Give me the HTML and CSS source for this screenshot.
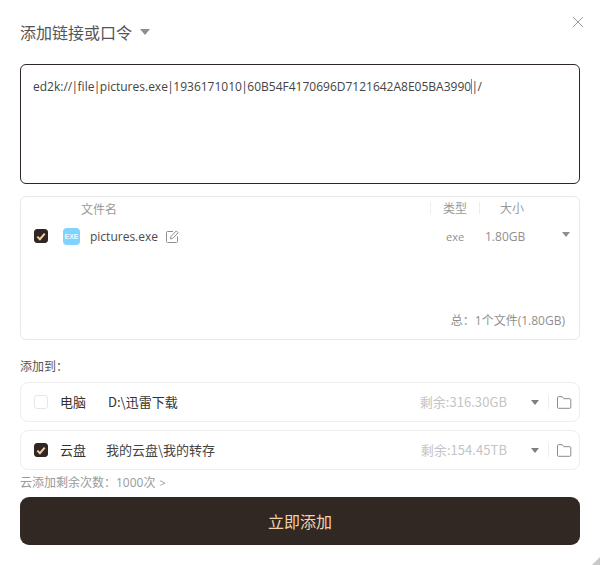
FILE: index.html
```html
<!DOCTYPE html>
<html lang="zh">
<head>
<meta charset="utf-8">
<title>添加链接或口令</title>
<link rel="stylesheet" href="styles.css">
</head>
<body>
<main class="dialog">
  <header class="head">
    <h1 class="title">添加链接或口令</h1>
    <span class="tri tri-title"></span>
    <svg class="close" width="12" height="12" viewBox="0 0 12 12"><path d="M1 1l10 10M11 1L1 11" stroke="#9a9a9a" stroke-width="1" fill="none"/></svg>
  </header>
  <div class="link-box">ed2k://<span class="pipe">|</span>file<span class="pipe">|</span>pictures.exe<span class="pipe">|</span>1936171010<span class="pipe">|</span>60B54F4170696D7121642A8E05BA3990<span class="caret"></span><span class="pipe">|</span>/</div>
  <section class="files">
    <div class="file-head">
      <span class="col-name">文件名</span>
      <span class="col-type">类型</span>
      <span class="col-size">大小</span>
    </div>
    <div class="file-row">
      <span class="check on"><svg width="10" height="9" viewBox="0 0 10 9"><path d="M1.300 4.600l2.600 2.600L8.700 1.600" stroke="#f3cfa0" stroke-width="2" fill="none"/></svg></span>
      <span class="exe">EXE</span>
      <span class="file-name">pictures.exe</span>
      <svg class="edit" width="13" height="13" viewBox="0 0 13 13"><path d="M7 1.500H1.500a1 1 0 0 0-1 1v9a1 1 0 0 0 1 1h9a1 1 0 0 0 1-1V6.500M4.500 8.800l.4-2.300L10.300.900l1.900 1.900-5.500 5.600z" stroke="#8f8f8f" stroke-width="1" fill="none"/></svg>
      <span class="file-type">exe</span>
      <span class="file-size">1.80GB</span>
      <span class="tri tri-row"></span>
    </div>
    <div class="total">总：1个文件(1.80GB)</div>
  </section>
  <div class="add-to">添加到：</div>
  <div class="target">
    <span class="check"></span>
    <span class="target-name">电脑</span>
    <span class="target-path path-pc">D:\迅雷下载</span>
    <span class="free">剩余:316.30GB</span>
    <span class="tri tri-target"></span>
    <span class="sep"></span>
    <svg class="folder" width="15" height="13" viewBox="0 0 15 13"><path d="M1.500.700h3.800l1.500 2h6a1 1 0 0 1 1 1v7.600a1 1 0 0 1-1 1H1.500a1 1 0 0 1-1-1V1.700a1 1 0 0 1 1-1z" stroke="#8a8a90" stroke-width="1" fill="none"/></svg>
  </div>
  <div class="target">
    <span class="check on"><svg width="10" height="9" viewBox="0 0 10 9"><path d="M1.300 4.600l2.600 2.600L8.700 1.600" stroke="#f3cfa0" stroke-width="2" fill="none"/></svg></span>
    <span class="target-name">云盘</span>
    <span class="target-path path-cloud">我的云盘\我的转存</span>
    <span class="free">剩余:154.45TB</span>
    <span class="tri tri-target"></span>
    <span class="sep"></span>
    <svg class="folder" width="15" height="13" viewBox="0 0 15 13"><path d="M1.500.700h3.800l1.500 2h6a1 1 0 0 1 1 1v7.600a1 1 0 0 1-1 1H1.500a1 1 0 0 1-1-1V1.700a1 1 0 0 1 1-1z" stroke="#8a8a90" stroke-width="1" fill="none"/></svg>
  </div>
  <div class="quota">云添加剩余次数：1000次 <span class="gt">&gt;</span></div>
  <button class="submit" type="button">立即添加</button>
  <span class="grip"></span>
</main>
</body>
</html>
```
FILE: styles.css
```css
* { box-sizing: border-box; }
html, body { margin: 0; padding: 0; background: #fff; }
body {
  width: 600px;
  height: 565px;
  overflow: hidden;
  font-family: "Open Sans", "Noto Sans CJK SC", sans-serif;
  color: #333;
}
.dialog {
  position: relative;
  width: 600px;
  height: 565px;
  padding: 0 20px;
  display: flex;
  flex-direction: column;
}
.head {
  height: 64px;
  display: flex;
  align-items: center;
  padding-bottom: 1px;
}
.title {
  margin: 0;
  font-size: 16px;
  font-weight: 400;
  color: #555;
  line-height: 24px;
  font-family: "Noto Sans CJK SC", sans-serif;
}
.tri {
  display: block;
  width: 0;
  height: 0;
  border-style: solid;
  border-color: #8e8e8e transparent transparent;
}
.tri-title {
  margin-left: 8px;
  border-width: 6px 5px 0;
  margin-top: 1px;
}
.close { position: absolute; top: 16px; right: 16px; }
.link-box {
  height: 120px;
  border: 1px solid #2f2723;
  border-radius: 6px;
  padding: 13px 12px;
  font-size: 12px;
  line-height: 18px;
  color: #444;
  white-space: nowrap;
}
.pipe { margin: 0 -0.6px; }
.caret {
  display: inline-block;
  width: 1px;
  height: 15px;
  background: #888;
  vertical-align: -3px;
}
.files {
  margin-top: 12px;
  height: 144px;
  border: 1px solid #e8e8e8;
  border-radius: 6px;
  display: flex;
  flex-direction: column;
  font-size: 12px;
}
.file-head {
  display: flex;
  align-items: center;
  height: 22px;
  padding-left: 60px;
  color: #9a9a9a;
  font-family: "Noto Sans CJK SC", sans-serif;
}
.col-name { flex: 1; }
.col-type {
  width: 49px;
  padding-left: 12px;
  border-left: 1px solid #eee;
  line-height: 12px;
}
.col-size {
  width: 100px;
  padding-left: 20px;
  border-left: 1px solid #eee;
  line-height: 12px;
}
.file-row {
  display: flex;
  align-items: center;
  height: 34px;
  padding-left: 13px;
}
.check {
  flex: none;
  width: 14px;
  height: 14px;
  border: 1px solid #e6e6e6;
  border-radius: 3px;
  display: flex;
  align-items: center;
  justify-content: center;
}
.check.on { background: #2f2723; border-color: #2f2723; }
.exe {
  margin-left: 15px;
  width: 17px;
  height: 17px;
  border-radius: 4px;
  background: #7fd4ff;
  color: #eaf8ff;
  font-family: "Liberation Sans", sans-serif;
  font-size: 7px;
  font-weight: 700;
  line-height: 17px;
  text-align: center;
}
.file-name { margin-left: 10px; font-size: 12px; color: #4a4a4a; }
.edit { margin-left: 8px; }
.file-type { margin-left: auto; color: #8f8f8f; font-size: 11px; width: 39px; }
.file-size { width: 77px; color: #8f8f8f; }
.tri-row { margin-right: 9px; border-width: 5px 4px 0; margin-top: -3px; }
.total {
  margin-top: auto;
  padding: 0 14px 9px 0;
  text-align: right;
  color: #8f8f8f;
  line-height: 18px;
}
.add-to {
  margin-top: 17px;
  height: 25px;
  line-height: 18px;
  font-size: 12px;
  color: #555;
  font-family: "Noto Sans CJK SC", sans-serif;
}
.target {
  height: 40px;
  margin-bottom: 8px;
  border: 1px solid #eeeeee;
  border-radius: 8px;
  display: flex;
  align-items: center;
  padding-left: 13px;
  font-size: 13px;
  line-height: 18px;
  font-family: "Noto Sans CJK SC", sans-serif;
}
.target-name { margin-left: 12px; width: 27px; color: #333; }
.target-path { color: #333; }
.path-pc { margin-left: 21px; }
.path-cloud { margin-left: 19px; color: #444; }
.free { margin-left: auto; color: #c4c4c4; font-size: 13px; letter-spacing: 0.05px; }
.tri-target { margin-left: 24px; border-width: 5px 4px 0; border-top-color: #7d7d86; }
.sep { margin-left: 9px; width: 1px; height: 14px; background: #eee; }
.folder { margin: 0 7px 0 8px; }
.quota {
  margin-top: -4px;
  height: 23px;
  line-height: 18px;
  font-size: 12px;
  color: #9a9a9a;
  white-space: nowrap;
}
.gt { margin-left: 1px; font-size: 11px; }
.submit {
  height: 48px;
  border: 0;
  border-radius: 9px;
  background: #312824;
  color: #f3d2a8;
  font-size: 16px;
  font-family: "Noto Sans CJK SC", sans-serif;
}
.grip {
  position: absolute;
  right: 0;
  bottom: 0;
  width: 0;
  height: 0;
  border-style: solid;
  border-width: 0 0 8px 8px;
  border-color: transparent transparent #c8c8c8;
}
```
